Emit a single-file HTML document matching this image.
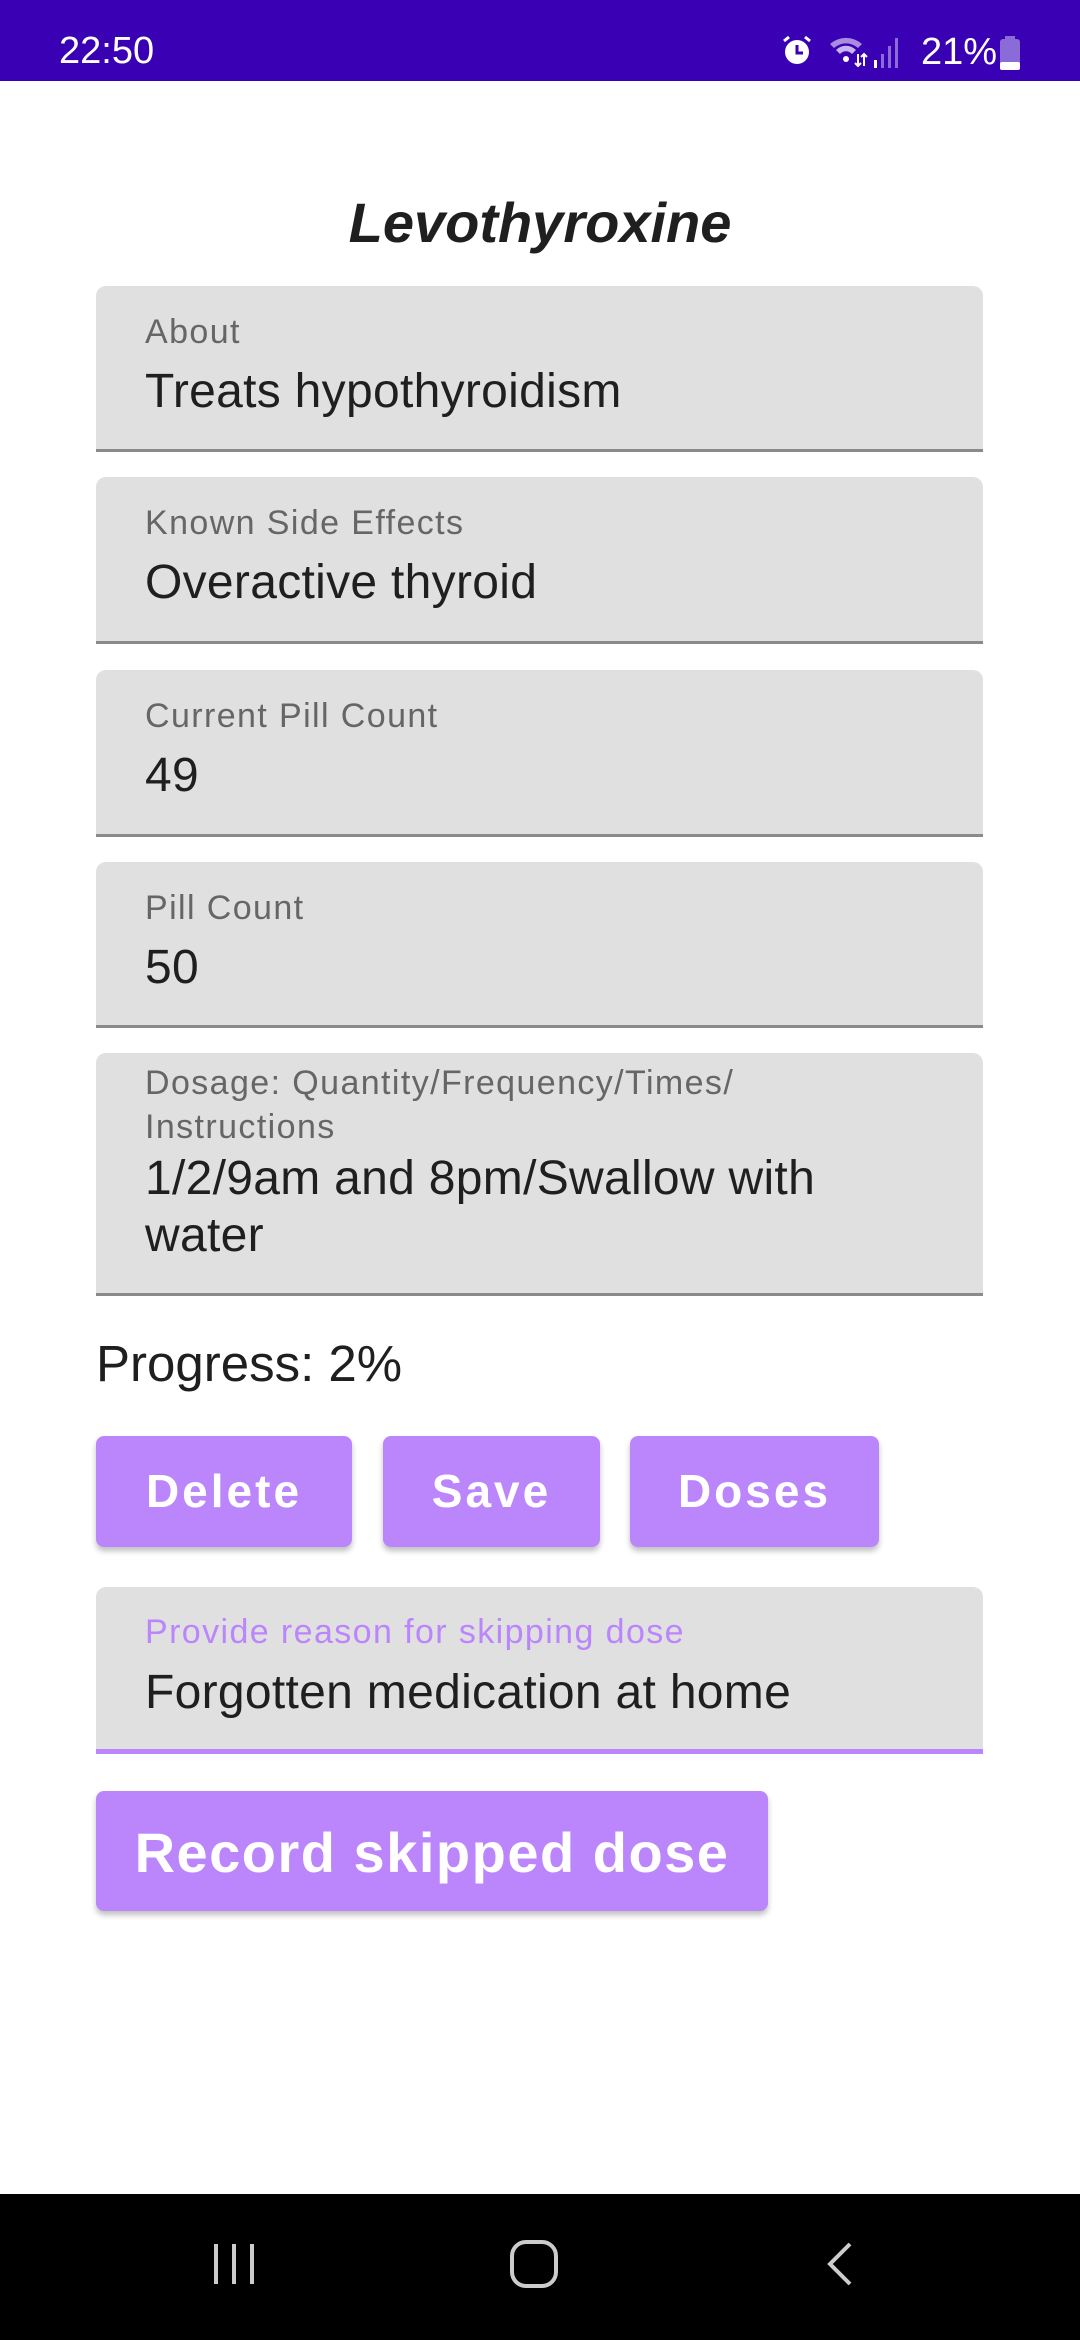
<!DOCTYPE html>
<html><head><meta charset="utf-8"><style>
*{margin:0;padding:0;box-sizing:border-box}
body{width:1080px;height:2340px;background:#fff;position:relative;overflow:hidden;font-family:"Liberation Sans",sans-serif;color:#1f1f1f}
.sb{position:absolute;left:0;top:0;width:1080px;height:81px;background:#3a00b4;color:#fff}
.a{position:absolute;white-space:nowrap}
.f{position:absolute;left:96px;width:887px;background:#e0e0e0;border-radius:10px 10px 0 0;border-bottom:3px solid #8a8a8a}
.lab{position:absolute;left:49px;font-size:34px;color:#666;letter-spacing:1.4px}
.val{position:absolute;left:49px;font-size:48px;color:#1f1f1f;letter-spacing:0.3px}
.btn{position:absolute;background:#bb86fc;border-radius:8px;color:#fff;font-weight:bold;text-align:center;box-shadow:0 4px 6px rgba(0,0,0,.25);letter-spacing:3px}
.nav{position:absolute;left:0;top:2194px;width:1080px;height:146px;background:#000}
</style></head><body>
<div class="sb">
<div class="a" style="left:59px;top:30px;font-size:38px">22:50</div>
<svg class="a" style="left:780px;top:34px" width="34" height="34" viewBox="0 0 34 34"><circle cx="17" cy="18" r="12" fill="#fff"/><path d="M17 11v8h6" stroke="#3a00b4" stroke-width="3" fill="none"/><path d="M4 7l5-4M30 7l-5-4" stroke="#fff" stroke-width="3"/></svg>
<svg class="a" style="left:828px;top:34px" width="70" height="36" viewBox="0 0 70 36"><path d="M2 10a24 24 0 0 1 32 0l-4 4a18 18 0 0 0-24 0z" fill="#a98ce0"/><path d="M8 16a14 14 0 0 1 20 0l-4 4a8 8 0 0 0-12 0z" fill="#c8b5f0"/><circle cx="18" cy="25" r="3" fill="#fff"/><path d="M30 20v12M27 29l3 3 3-3M36 32v-12M33 23l3-3 3 3" stroke="#fff" stroke-width="2" fill="none"/><rect x="46" y="26" width="3" height="8" fill="#fff"/><rect x="53" y="20" width="3" height="14" fill="#8a6bd8"/><rect x="60" y="12" width="3" height="22" fill="#8a6bd8"/><rect x="67" y="4" width="3" height="30" fill="#8a6bd8"/></svg>
<div class="a" style="left:921px;top:31px;font-size:38px">21%</div>
<svg class="a" style="left:998px;top:36px" width="24" height="34" viewBox="0 0 24 34"><rect x="7" y="0" width="10" height="4" fill="#8a6bd8"/><rect x="2" y="3" width="20" height="31" rx="3" fill="#8a6bd8"/><rect x="2" y="26" width="20" height="8" rx="2" fill="#fff"/></svg>
</div>
<div class="a" style="left:0;width:1080px;text-align:center;top:190px;font-size:56px;font-weight:bold;font-style:italic">Levothyroxine</div>

<div class="f" style="top:286px;height:166px"><div class="lab" style="top:27px">About</div><div class="val" style="top:78px">Treats hypothyroidism</div></div>
<div class="f" style="top:477px;height:167px"><div class="lab" style="top:27px">Known Side Effects</div><div class="val" style="top:78px">Overactive thyroid</div></div>
<div class="f" style="top:670px;height:167px"><div class="lab" style="top:27px">Current Pill Count</div><div class="val" style="top:78px">49</div></div>
<div class="f" style="top:862px;height:166px"><div class="lab" style="top:27px">Pill Count</div><div class="val" style="top:78px">50</div></div>
<div class="f" style="top:1053px;height:243px"><div class="lab" style="top:8px;line-height:44px">Dosage: Quantity/Frequency/Times/<br>Instructions</div><div class="val" style="top:97px;line-height:57px">1/2/9am and 8pm/Swallow with<br>water</div></div>

<div class="a" style="left:96px;top:1334px;font-size:51px">Progress: 2%</div>
<div class="btn" style="left:96px;top:1436px;width:256px;height:111px;line-height:111px;font-size:46px">Delete</div>
<div class="btn" style="left:383px;top:1436px;width:217px;height:111px;line-height:111px;font-size:46px">Save</div>
<div class="btn" style="left:630px;top:1436px;width:249px;height:111px;line-height:111px;font-size:46px">Doses</div>

<div class="f" style="top:1587px;height:167px;border-bottom:5px solid #bb86fc"><div class="lab" style="top:26px;color:#bb86fc">Provide reason for skipping dose</div><div class="val" style="top:78px">Forgotten medication at home</div></div>
<div class="btn" style="left:96px;top:1791px;width:672px;height:120px;line-height:124px;font-size:56px;letter-spacing:1.5px">Record skipped dose</div>

<div class="nav">
<svg class="a" style="left:210px;top:46px" width="48" height="48" viewBox="0 0 48 48"><path d="M6 4v40M24 4v40M42 4v40" stroke="#ccc" stroke-width="4"/></svg>
<svg class="a" style="left:508px;top:44px" width="52" height="52" viewBox="0 0 52 52"><rect x="4" y="4" width="44" height="44" rx="14" stroke="#ccc" stroke-width="4" fill="none"/></svg>
<svg class="a" style="left:822px;top:46px" width="36" height="48" viewBox="0 0 36 48"><path d="M28 4L8 24l20 20" stroke="#ccc" stroke-width="4" fill="none"/></svg>
</div>
</body></html>
